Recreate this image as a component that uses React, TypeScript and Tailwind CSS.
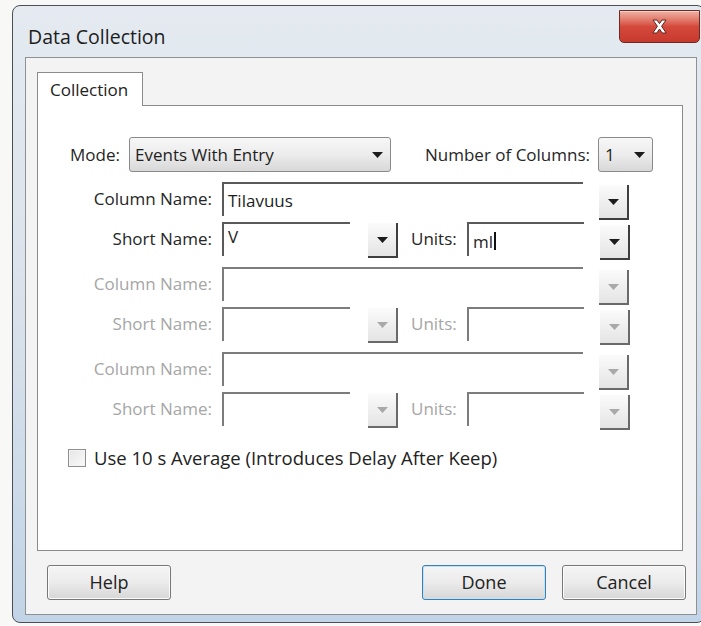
import * as React from "react";

// Win7-style "Data Collection" dialog with a single Collection tab

function Arrow({ dim = false }: { dim?: boolean }) {
  return (
    <svg width="11" height="6" viewBox="0 0 11 6">
      <path d="M0 0h11L5.5 6z" fill={dim ? "#a9a9a9" : "#1c1c1c"} />
    </svg>
  );
}

function DropBtn({ dim = false, top = "mt-[3px]" }: { dim?: boolean; top?: string }) {
  return (
    <div
      className={`${top} w-[30px] h-[35px] flex items-center justify-center border-r-2 border-b-2 bg-linear-to-b from-[#fbfbfb] to-[#e4e4e4] ${
        dim ? "border-[#6a6a6a]" : "border-[#3e3e3e]"
      }`}
    >
      <Arrow dim={dim} />
    </div>
  );
}

function Box({
  w,
  dim = false,
  children,
  pad = "pt-[4px]",
}: {
  w: string;
  dim?: boolean;
  children?: React.ReactNode;
  pad?: string;
}) {
  return (
    <div
      className={`${w} ${pad} h-[34px] flex items-start pl-[4px] border-t-2 border-l-2 bg-white text-[#1e1e1e] ${
        dim ? "border-[#7c7c7c]" : "border-[#5a5a5a]"
      }`}
    >
      {children}
    </div>
  );
}

function Label({ children, dim = false }: { children: React.ReactNode; dim?: boolean }) {
  return (
    <div
      className={`w-[174px] h-[34px] flex items-center justify-end ${
        dim ? "text-[#a6a6a6]" : "text-[#262626]"
      }`}
    >
      {children}
    </div>
  );
}

function ColumnRow({ dim = false, value }: { dim?: boolean; value?: string }) {
  return (
    <div className="h-[40px] flex items-start">
      <Label dim={dim}>Column Name:</Label>
      <div className="ml-[10px]">
        <Box w="w-[361px]" dim={dim}>
          {value}
        </Box>
      </div>
      <div className="ml-[16px]">
        <DropBtn dim={dim} />
      </div>
    </div>
  );
}

function ShortRow({
  dim = false,
  name,
  units,
  h = "h-[45px]",
}: {
  dim?: boolean;
  name?: string;
  units?: string;
  h?: string;
}) {
  return (
    <div className={`${h} flex items-start`}>
      <Label dim={dim}>Short Name:</Label>
      <div className="ml-[10px]">
        <Box w="w-[128px]" dim={dim} pad="pt-[0px]">
          {name}
        </Box>
      </div>
      <div className="ml-[18px]">
        <DropBtn dim={dim} top="mt-[1px]" />
      </div>
      <div
        className={`ml-[13px] w-[48px] h-[34px] flex items-center ${
          dim ? "text-[#a6a6a6]" : "text-[#262626]"
        }`}
      >
        Units:
      </div>
      <div className="ml-[8px]">
        <Box w="w-[117px]" dim={dim} pad="pt-[5px]">
          {units}
          {units && <span className="ml-[1px] mt-[3px] w-[2px] h-[18px] bg-[#111]" />}
        </Box>
      </div>
      <div className="ml-[16px]">
        <DropBtn dim={dim} />
      </div>
    </div>
  );
}

function PushButton({ children, primary = false }: { children: React.ReactNode; primary?: boolean }) {
  return (
    <button
      className={`h-[35px] w-[124px] rounded-[3px] border bg-linear-to-b from-[#f5f5f5] via-[#ebebeb] to-[#d7d7d7] text-[#222] text-[18px] ${
        primary
          ? "border-[#3d7db0] shadow-[inset_0_0_0_1px_#bfe3f5]"
          : "border-[#777777] shadow-[inset_0_0_0_1px_#fbfbfb]"
      }`}
    >
      {children}
    </button>
  );
}

export default function App() {
  return (
    <div className="w-[701px] h-[626px] overflow-hidden bg-[#f8f8f7] pl-[12px] pt-[5px] font-['Open_Sans',sans-serif] text-[17px]">
      <div className="w-[693px] h-[618px] rounded-[8px] border border-[#4b4f55] bg-linear-to-b from-[#e4eaf0] via-[#d9e2eb] to-[#c2d4e7] flex flex-col pl-[12px] pr-[7px] pb-[7px]">
        {/* title bar */}
        <div className="h-[51px] flex items-start justify-between">
          <div className="mt-[16px] ml-[3px] text-[19.5px] text-[#1d1d1d]">Data Collection</div>
          <div className="mt-[4px] -mr-[3px] w-[81px] h-[33px] rounded-b-[5px] border border-[#6b2b24] bg-linear-to-b from-[#eeb2a6] via-[#d4493c] to-[#c8392d] flex items-center justify-center shadow-[inset_0_1px_0_#f7d0c8]">
            <svg width="17" height="15" viewBox="0 0 17 15">
              <path
                d="M2 1h4l2.5 3.6L11 1h4l-4.4 6.3L15.2 14h-4l-2.7-4-2.7 4h-4l4.6-6.7z"
                fill="#ffffff"
                stroke="#5b2720"
                strokeWidth="1"
                strokeLinejoin="round"
              />
            </svg>
          </div>
        </div>

        {/* client area */}
        <div className="flex-1 flex flex-col bg-[#f3f3f3] border border-[#8f9091]">
          <div className="mt-[14px] ml-[11px] mr-[13px]">
            <div className="relative z-10 -mb-px w-[106px] h-[34px] bg-white border border-b-0 border-[#8b8b8b] flex items-center pl-[12px] text-[#222]">
              Collection
            </div>
            <div className="h-[446px] bg-white border border-[#8b8b8b] pt-[31px] text-[#262626]">
              <div className="h-[35px] flex items-center">
                <div className="ml-[32px] w-[59px]">Mode:</div>
                <div className="w-[262px] h-[35px] rounded-[3px] border border-[#8a8a8a] bg-linear-to-b from-[#f7f7f7] via-[#ececec] to-[#d8d8d8] flex items-center justify-between pl-[5px] pr-[7px]">
                  <span className="text-[#1e1e1e]">Events With Entry</span>
                  <Arrow />
                </div>
                <div className="ml-[34px] w-[173px]">Number of Columns:</div>
                <div className="w-[55px] h-[35px] rounded-[3px] border border-[#8a8a8a] bg-linear-to-b from-[#f7f7f7] via-[#ececec] to-[#d8d8d8] flex items-center justify-between pl-[6px] pr-[7px]">
                  <span className="text-[#1e1e1e]">1</span>
                  <Arrow />
                </div>
              </div>

              <div className="mt-[10px]">
                <ColumnRow value="Tilavuus" />
                <ShortRow name="V" units="ml" />
                <ColumnRow dim />
                <ShortRow dim />
                <ColumnRow dim />
                <ShortRow dim h="h-[40px]" />
              </div>

              <div className="mt-[12px] ml-[30px] flex items-center">
                <div className="w-[18px] h-[18px] border border-[#8e8f8f] bg-linear-to-br from-[#e6e6e6] to-[#fafafa] shadow-[inset_0_0_0_1px_#f4f4f4]" />
                <span className="ml-[8px] text-[18.5px] text-[#222]">
                  Use 10 s Average (Introduces Delay After Keep)
                </span>
              </div>
            </div>
          </div>

          <div className="mt-[14px] pl-[21px] pr-[10px] flex items-center">
            <PushButton>Help</PushButton>
            <div className="ml-auto flex gap-[16px]">
              <PushButton primary>Done</PushButton>
              <PushButton>Cancel</PushButton>
            </div>
          </div>
        </div>
      </div>
    </div>
  );
}
